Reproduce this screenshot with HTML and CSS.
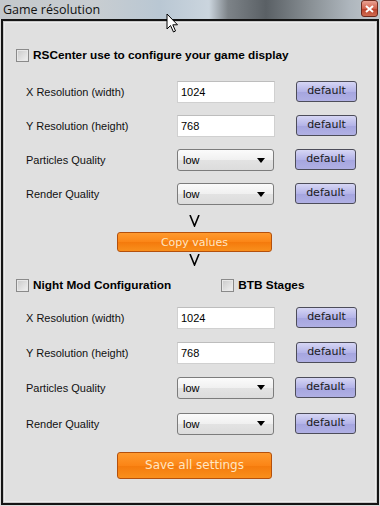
FILE: index.html
```html
<!DOCTYPE html>
<html lang="en">
<head>
    <meta charset="UTF-8">
    <meta name="viewport" content="width=device-width, initial-scale=1.0">
    <title>Game résolution</title>
    <link rel="stylesheet" href="styles.css">
</head>
<body>
    <div class="window">
        <div class="titlebar">
            <span class="title">Game résolution</span>
            <button class="close">
                <svg width="9" height="8" viewBox="0 0 9 8"><path d="M1 1 L8 7 M8 1 L1 7" stroke="#fff" stroke-width="2"/></svg>
            </button>
        </div>

        <div class="frame">
            <label class="check-row">
                <span class="checkbox"></span>
                <span class="check-label">RSCenter use to configure your game display</span>
            </label>

            <div class="rows">
                <div class="row">
                    <span class="row-label">X Resolution (width)</span>
                    <input type="text" class="field" value="1024">
                    <button class="btn-default">default</button>
                </div>
                <div class="row">
                    <span class="row-label">Y Resolution (height)</span>
                    <input type="text" class="field" value="768">
                    <button class="btn-default">default</button>
                </div>
                <div class="row">
                    <span class="row-label">Particles Quality</span>
                    <div class="select"><span>low</span><span class="caret"></span></div>
                    <button class="btn-default">default</button>
                </div>
                <div class="row">
                    <span class="row-label">Render Quality</span>
                    <div class="select"><span>low</span><span class="caret"></span></div>
                    <button class="btn-default">default</button>
                </div>
            </div>

            <div class="copy-block">
                <svg class="arrow" width="11" height="12" viewBox="0 0 11 12"><path d="M1 0 L5.5 11 L10 0" fill="none" stroke="#000" stroke-width="1.6"/></svg>
                <button class="btn-orange btn-copy">Copy values</button>
                <svg class="arrow" width="11" height="12" viewBox="0 0 11 12"><path d="M1 0 L5.5 11 L10 0" fill="none" stroke="#000" stroke-width="1.6"/></svg>
            </div>

            <div class="check-pair">
                <label class="check-row">
                    <span class="checkbox"></span>
                    <span class="check-label">Night Mod Configuration</span>
                </label>
                <label class="check-row">
                    <span class="checkbox"></span>
                    <span class="check-label">BTB Stages</span>
                </label>
            </div>

            <div class="rows rows-night">
                <div class="row">
                    <span class="row-label">X Resolution (width)</span>
                    <input type="text" class="field" value="1024">
                    <button class="btn-default">default</button>
                </div>
                <div class="row">
                    <span class="row-label">Y Resolution (height)</span>
                    <input type="text" class="field" value="768">
                    <button class="btn-default">default</button>
                </div>
                <div class="row">
                    <span class="row-label">Particles Quality</span>
                    <div class="select"><span>low</span><span class="caret"></span></div>
                    <button class="btn-default">default</button>
                </div>
                <div class="row">
                    <span class="row-label">Render Quality</span>
                    <div class="select"><span>low</span><span class="caret"></span></div>
                    <button class="btn-default">default</button>
                </div>
            </div>

            <div class="save-block">
                <button class="btn-orange btn-save">Save all settings</button>
            </div>
        </div>

        <!-- mouse pointer over the title bar -->
        <svg class="cursor" width="14" height="21" viewBox="0 0 14 21">
            <path d="M1 1 L1 16 L4.5 12.5 L7.5 19 L9.5 18 L6.8 11.8 L11.5 11.8 Z" fill="#fff" stroke="#000" stroke-width="1" stroke-linejoin="round"/>
        </svg>
    </div>
</body>
</html>
```

FILE: styles.css
```css
* {
    margin: 0;
    padding: 0;
    box-sizing: border-box;
}

body {
    width: 380px;
    height: 506px;
    overflow: hidden;
    background: #dcdcdc;
    font-family: 'DejaVu Sans', Verdana, sans-serif;
}

.window {
    position: relative;
    width: 380px;
    height: 506px;
}

.titlebar {
    height: 19px;
    display: flex;
    align-items: center;
    justify-content: space-between;
    padding: 0 2px 0 3px;
    background: linear-gradient(90deg, #c4c8cb 0%, #c8cdd1 25%, #b9c7d3 42%, #cbd5de 55%, #7d8388 60%, #5a6065 70%, #8a9196 82%, #aeb6bd 92%, #c2c8cc 100%);
}

.title {
    font-family: 'Open Sans', 'Noto Sans', sans-serif;
    font-size: 12.5px;
    color: #111;
    margin-top: -1px;
}

.close {
    width: 17px;
    height: 17px;
    margin-top: -2px;
    border: 1px solid #6e2a1e;
    border-radius: 3px;
    background: linear-gradient(#eaa394, #d2624c 50%, #b8402b 51%, #cf6b50);
    display: flex;
    align-items: center;
    justify-content: center;
}

.frame {
    height: 486px;
    margin: 0 1px;
    border: 2px solid #151515;
    background: #e0e0e0;
    box-shadow: inset 1px 1px 0 #c8c8c8, inset -1px -1px 0 #c8c8c8, inset 2px 2px 0 #ececec, inset -2px -2px 0 #ececec;
    padding: 23px 0 0 13px;
}

.check-row {
    height: 22px;
    display: flex;
    align-items: center;
    gap: 4px;
}

.checkbox {
    width: 13px;
    height: 13px;
    border: 1px solid #8a8a8a;
    background: linear-gradient(135deg, #c9c9c9, #f2f2f2);
    box-shadow: inset 0 0 0 1px #e8e8e8;
}

.check-label {
    font-family: 'Liberation Sans', Arial, sans-serif;
    font-weight: bold;
    font-size: 11.8px;
    color: #000;
}

.rows {
    margin-top: 9px;
}

.row {
    height: 34px;
    display: flex;
    align-items: center;
    padding-left: 10px;
}

.rows-night {
    margin-top: 4px;
}

.rows-night .row {
    height: 35px;
}

.rows-night .row:last-child {
    height: 36px;
    padding-top: 1px;
}

.row-label {
    width: 151px;
    font-family: 'Liberation Sans', Arial, sans-serif;
    font-size: 11px;
    color: #111;
}

.field {
    width: 98px;
    height: 22px;
    border: 1px solid #d0d0d0;
    border-top-color: #bdbdbd;
    background: #fff;
    padding: 0 3px;
    font-family: 'Liberation Sans', Arial, sans-serif;
    font-size: 11px;
    color: #000;
    outline: none;
}

.select {
    width: 97px;
    height: 22px;
    display: flex;
    align-items: center;
    justify-content: space-between;
    padding: 0 8px 0 5px;
    border: 1px solid #7c7c7c;
    border-radius: 3px;
    background: linear-gradient(#fbfbfb, #f0f0f0 50%, #e3e3e3 51%, #dcdcdc);
    font-family: 'Liberation Sans', Arial, sans-serif;
    font-size: 11px;
    color: #000;
}

.caret {
    width: 0;
    height: 0;
    border-left: 4px solid transparent;
    border-right: 4px solid transparent;
    border-top: 5px solid #000;
}

.btn-default {
    width: 61px;
    height: 21px;
    margin-left: 21px;
    margin-top: -1px;
    border: 1px solid #4d4d5a;
    border-radius: 3px;
    background: linear-gradient(#d6d6f4, #b4b4e8 50%, #a5a5df 51%, #b0b0e4);
    font-family: 'DejaVu Sans', Verdana, sans-serif;
    font-size: 11px;
    color: #1a1a1a;
    padding-bottom: 2px;
}

.copy-block {
    display: flex;
    flex-direction: column;
    align-items: center;
    padding-right: 4px;
    margin-top: 4px;
}

.arrow {
    display: block;
}

.copy-block .arrow:first-child {
    margin-bottom: 5px;
}

.copy-block .arrow:last-child {
    margin-top: 2px;
}

.btn-orange {
    width: 155px;
    border: 1px solid #b4500c;
    border-radius: 3px;
    background: linear-gradient(#ff9a2e, #fb8516 50%, #f47a0c 51%, #f98f1c);
    color: #ffe6c2;
    font-family: 'DejaVu Sans', Verdana, sans-serif;
}

.btn-copy {
    height: 20px;
    font-size: 11px;
}

.check-pair {
    display: flex;
    gap: 50px;
    margin-top: 8px;
}

.save-block {
    display: flex;
    justify-content: center;
    padding-right: 4px;
    margin-top: 11px;
}

.btn-save {
    height: 27px;
    font-size: 12px;
    padding-bottom: 2px;
}

.cursor {
    position: absolute;
    left: 166px;
    top: 13px;
}
```
